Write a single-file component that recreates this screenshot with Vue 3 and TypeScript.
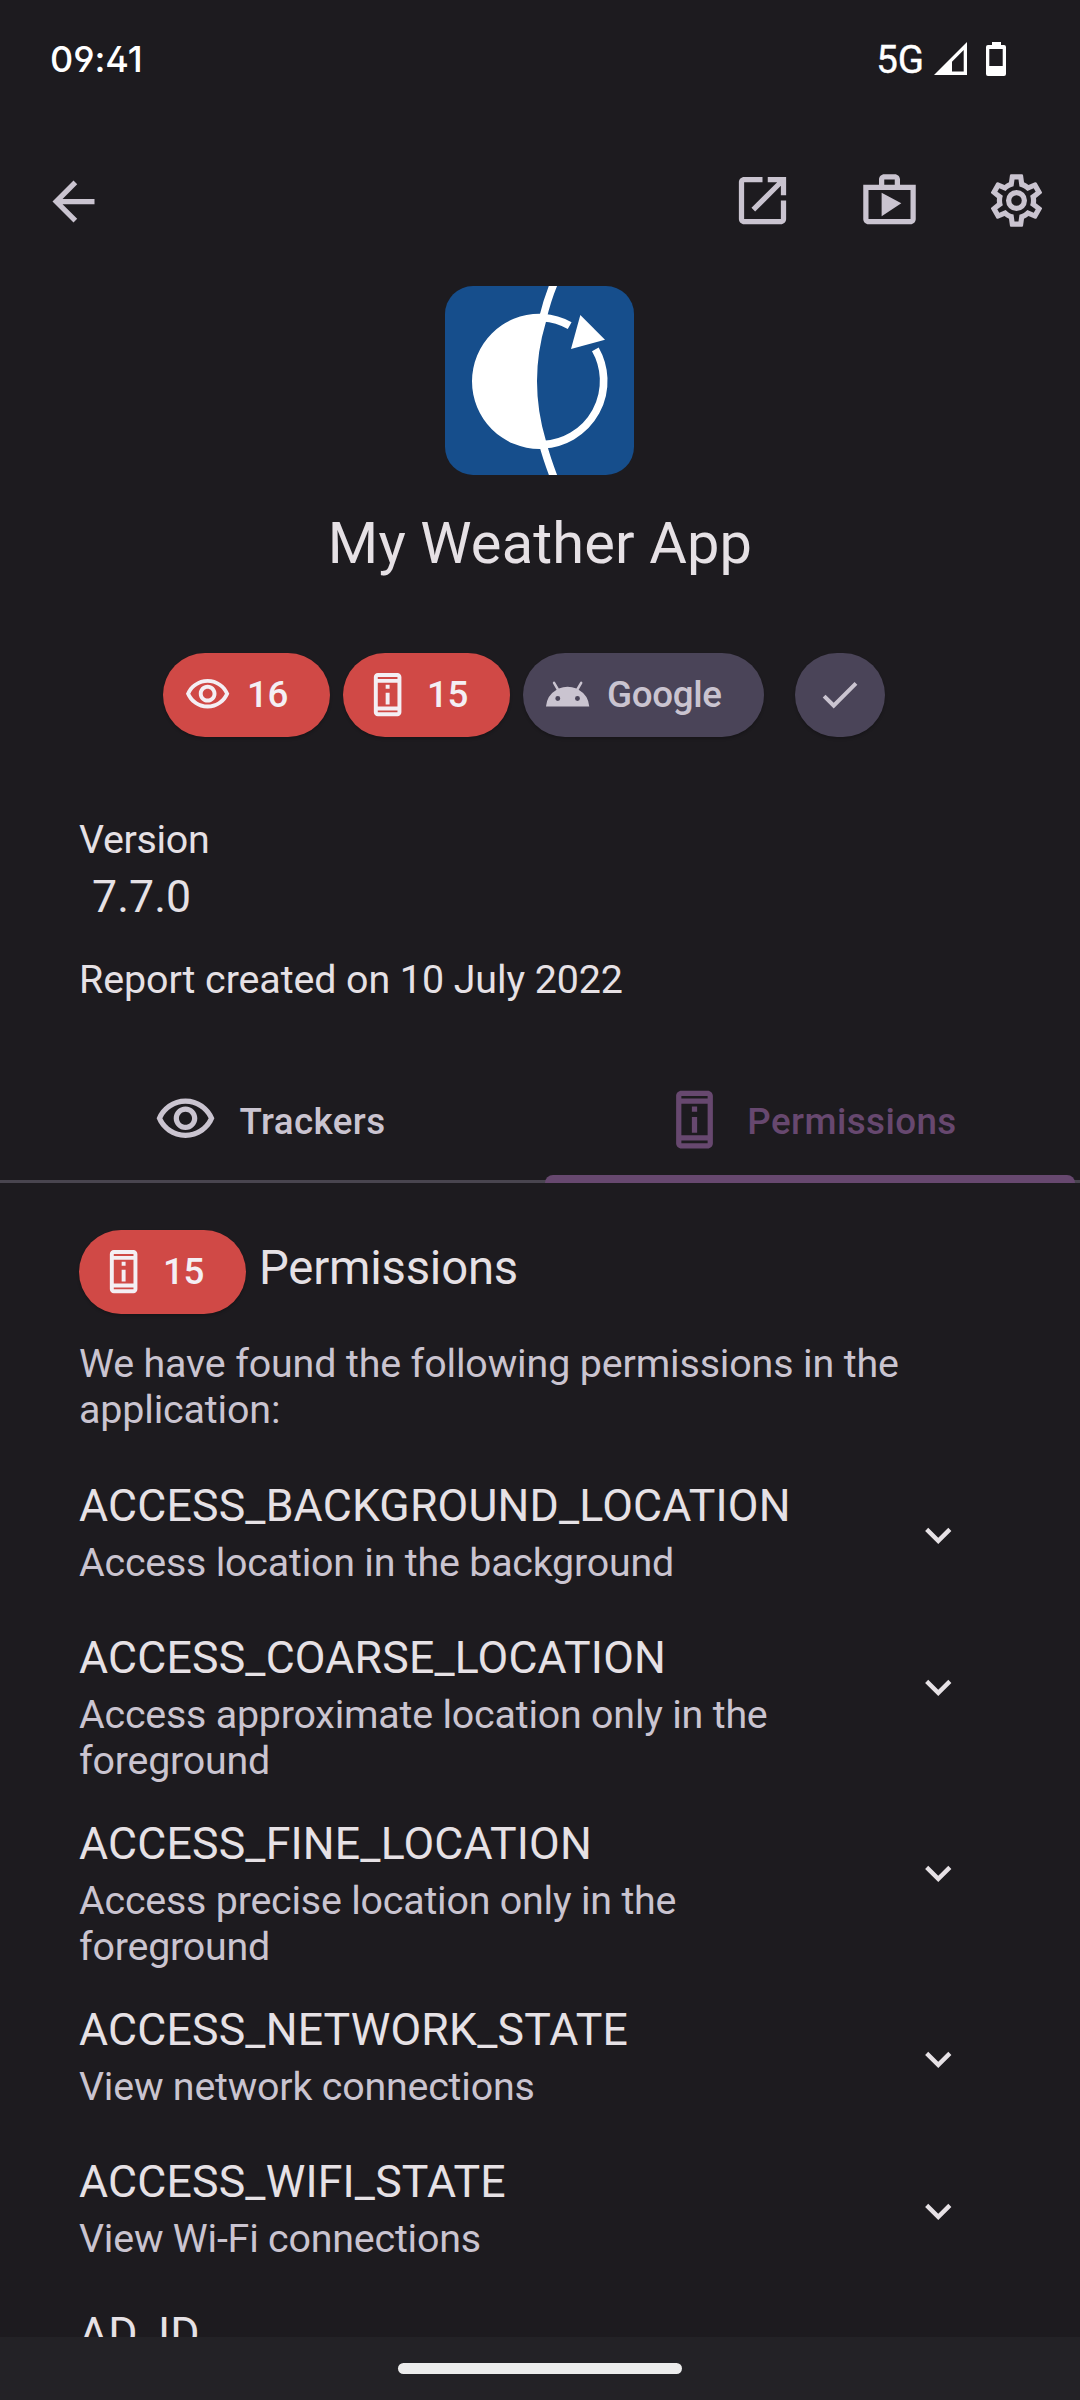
<script setup lang="ts">
interface Permission {
  name: string
  description: string
}

const permissions: Permission[] = [
  { name: 'ACCESS_BACKGROUND_LOCATION', description: 'Access location in the background' },
  { name: 'ACCESS_COARSE_LOCATION', description: 'Access approximate location only in the foreground' },
  { name: 'ACCESS_FINE_LOCATION', description: 'Access precise location only in the foreground' },
  { name: 'ACCESS_NETWORK_STATE', description: 'View network connections' },
  { name: 'ACCESS_WIFI_STATE', description: 'View Wi-Fi connections' },
  { name: 'AD_ID', description: '' },
]

const icons = {
  back: 'M20 11H7.83l5.59-5.59L12 4l-8 8 8 8 1.41-1.41L7.83 13H20v-2z',
  shop: 'M16 6V4c0-1.11-.89-2-2-2h-4c-1.11 0-2 .89-2 2v2H2v13c0 1.11.89 2 2 2h16c1.11 0 2-.89 2-2V6h-6zm-6-2h4v2h-4V4zm10 15H4V8h16v11zM9 18l7.5-5L9 9z',
  open: 'M5 3C3.9 3 3 3.9 3 5V19C3 20.1 3.9 21 5 21H19C20.1 21 21 20.1 21 19V12H19V19H5V5H12V3H5M14 3V5H17.6L7.8 14.8L9.2 16.2L19 6.4V10H21V3H14Z',
  gear: 'M12,8A4,4 0 0,1 16,12A4,4 0 0,1 12,16A4,4 0 0,1 8,12A4,4 0 0,1 12,8M12,10A2,2 0 0,0 10,12A2,2 0 0,0 12,14A2,2 0 0,0 14,12A2,2 0 0,0 12,10M10,22C9.75,22 9.54,21.82 9.5,21.58L9.13,18.93C8.5,18.68 7.96,18.34 7.44,17.94L4.95,18.95C4.73,19.03 4.46,18.95 4.34,18.73L2.34,15.27C2.21,15.05 2.27,14.78 2.46,14.63L4.57,12.97L4.5,12L4.57,11L2.46,9.37C2.27,9.22 2.21,8.95 2.34,8.73L4.34,5.27C4.46,5.05 4.73,4.96 4.95,5.05L7.44,6.05C7.96,5.66 8.5,5.32 9.13,5.07L9.5,2.42C9.54,2.18 9.75,2 10,2H14C14.25,2 14.46,2.18 14.5,2.42L14.87,5.07C15.5,5.32 16.04,5.66 16.56,6.05L19.05,5.05C19.27,4.96 19.54,5.05 19.66,5.27L21.66,8.73C21.79,8.95 21.73,9.22 21.54,9.37L19.43,11L19.5,12L19.43,13L21.54,14.63C21.73,14.78 21.79,15.05 21.66,15.27L19.66,18.73C19.54,18.95 19.27,19.04 19.05,18.95L16.56,17.95C16.04,18.34 15.5,18.68 14.87,18.93L14.5,21.58C14.46,21.82 14.25,22 14,22H10M11.25,4L10.88,6.61C9.68,6.86 8.62,7.5 7.85,8.39L5.44,7.35L4.69,8.65L6.8,10.2C6.4,11.37 6.4,12.64 6.8,13.8L4.68,15.36L5.43,16.66L7.86,15.62C8.63,16.5 9.68,17.14 10.87,17.38L11.24,20H12.76L13.13,17.39C14.32,17.14 15.37,16.5 16.14,15.62L18.57,16.66L19.32,15.36L17.2,13.81C17.6,12.64 17.6,11.37 17.2,10.2L19.31,8.65L18.56,7.35L16.15,8.39C15.38,7.5 14.32,6.86 13.12,6.62L12.75,4H11.25Z',
  eye: 'M12 6c3.79 0 7.17 2.13 8.82 5.5C19.17 14.87 15.79 17 12 17s-7.17-2.13-8.82-5.5C4.83 8.13 8.21 6 12 6m0-2C7 4 2.73 7.11 1 11.5 2.73 15.89 7 19 12 19s9.27-3.11 11-7.5C21.27 7.11 17 4 12 4zm0 5c1.38 0 2.5 1.12 2.5 2.5S13.38 14 12 14s-2.5-1.12-2.5-2.5S10.62 9 12 9m0-2c-2.48 0-4.5 2.02-4.5 4.5S9.52 16 12 16s4.5-2.02 4.5-4.5S14.48 7 12 7z',
  device: 'M13 7h-2v2h2V7zm0 4h-2v6h2v-6zm4-9.99L7 1c-1.1 0-2 .9-2 2v18c0 1.1.9 2 2 2h10c1.1 0 2-.9 2-2V3c0-1.1-.9-1.99-2-1.99zM17 21H7v-1h10v1zm0-3H7V6h10v12zm0-14H7V3h10v1z',
  android: 'M17.6 9.48l1.84-3.18c.16-.31.04-.69-.26-.85a.637.637 0 0 0-.83.22l-1.88 3.24a11.463 11.463 0 0 0-8.94 0L5.65 5.67a.643.643 0 0 0-.87-.2c-.28.18-.37.54-.22.83L6.4 9.48A10.81 10.81 0 0 0 1 18h22a10.81 10.81 0 0 0-5.4-8.52zM7 15.25a1.25 1.25 0 1 1 0-2.5 1.25 1.25 0 0 1 0 2.5zm10 0a1.25 1.25 0 1 1 0-2.5 1.25 1.25 0 0 1 0 2.5z',
  check: 'M9 16.17L4.83 12l-1.42 1.41L9 19 21 7l-1.41-1.41z',
  chevron: 'M7.41 8.58L12 13.17l4.59-4.59L18 10l-6 6-6-6z',
}
</script>

<template>
  <div class="screen">
    <header class="status">
      <span class="clock">09:41</span>
      <div class="indicators">
        <span class="network">5G</span>
        <svg class="signal" viewBox="0 0 33 33"><path fill-rule="evenodd" d="M33 0V33H0ZM29.7 8L18 19.7V29.5H29.7Z" /></svg>
        <svg class="battery" viewBox="0 0 20 34"><path fill-rule="evenodd" d="M6 0h9v3h3a2 2 0 0 1 2 2v27a2 2 0 0 1-2 2H2a2 2 0 0 1-2-2V5a2 2 0 0 1 2-2h4zM3.3 7v17h13.4V7z" /></svg>
      </div>
    </header>

    <nav class="toolbar">
      <svg class="icon" viewBox="0 0 24 24"><path :d="icons.back" /></svg>
      <div class="actions">
        <svg class="icon" viewBox="0 0 24 24"><path :d="icons.open" /></svg>
        <svg class="icon" viewBox="0 0 24 24"><path fill-rule="evenodd" :d="icons.shop" /></svg>
        <svg class="icon" viewBox="0 0 24 24"><path :d="icons.gear" /></svg>
      </div>
    </nav>

    <section class="hero">
      <svg class="logo" viewBox="75 48 567 567">
        <rect x="75" y="48" width="567" height="567" fill="#164e8c" />
        <path class="white" d="M380 132Q370 131 359 131A203 203 0 0 0 359 537Q370 537 380 536L378 513Q351 424 351 334T378 155Z" />
        <path class="ring" d="M368 143Q412 146 449 167M526 238A191.500 191.500 0 0 1 370 524" />
        <path class="ring" d="M402 40Q382 88 368 146M368 520Q380 566 402 623" />
        <path class="white" d="M481 135L555 209L453 237Z" />
      </svg>
      <h1>My Weather App</h1>
    </section>

    <div class="chips">
      <div class="chip danger">
        <svg viewBox="0 0 24 24"><path :d="icons.eye" /></svg><span>16</span>
      </div>
      <div class="chip danger">
        <svg viewBox="0 0 24 24"><path :d="icons.device" /></svg><span>15</span>
      </div>
      <div class="chip wide">
        <svg viewBox="0 0 24 24"><path :d="icons.android" /></svg><span>Google</span>
      </div>
      <div class="chip round">
        <svg viewBox="0 0 24 24"><path :d="icons.check" /></svg>
      </div>
    </div>

    <section class="details">
      <p class="label">Version</p>
      <p class="version">7.7.0</p>
      <p class="label report">Report created on 10 July 2022</p>
    </section>

    <div class="tabs">
      <div class="tab">
        <svg class="icon" viewBox="0 0 24 24"><path :d="icons.eye" /></svg><span>Trackers</span>
      </div>
      <div class="tab active">
        <svg class="icon" viewBox="0 0 24 24"><path :d="icons.device" /></svg><span>Permissions</span>
      </div>
    </div>

    <main class="content">
      <div class="heading">
        <div class="chip danger">
          <svg viewBox="0 0 24 24"><path :d="icons.device" /></svg><span>15</span>
        </div>
        <h2>Permissions</h2>
      </div>
      <p class="intro">We have found the following permissions in the application:</p>
      <ul class="list">
        <li v-for="item in permissions" :key="item.name">
          <div class="text">
            <h3>{{ item.name }}</h3>
            <p>{{ item.description }}</p>
          </div>
          <svg viewBox="0 0 24 24"><path :d="icons.chevron" /></svg>
        </li>
      </ul>
    </main>

    <footer class="navbar"><div class="handle"></div></footer>
  </div>
</template>

<style>
body {
  margin: 0;
  background: #1d1b1f;
}
</style>

<style scoped>
.screen {
  display: flex;
  flex-direction: column;
  width: 1080px;
  height: 2400px;
  overflow: hidden;
  background: #1d1b1f;
  color: #e6e1e5;
  font-family: Roboto, sans-serif;
}

h1, h2, h3, p, ul {
  margin: 0;
  padding: 0;
  font-weight: 400;
}

svg {
  display: block;
  flex: none;
  fill: currentColor;
}

.icon {
  width: 63px;
  height: 63px;
}

.status {
  display: flex;
  justify-content: space-between;
  flex: none;
  box-sizing: border-box;
  height: 128px;
  padding: 42px 74px 0 50px;
  color: #fff;
}

.clock {
  font: 500 36px/34px Inter, sans-serif;
  font-feature-settings: 'ss01';
  letter-spacing: -0.1px;
}

.indicators {
  display: flex;
}

.network {
  margin-right: 10px;
  font-size: 38.5px;
  font-weight: 400;
  line-height: 36px;
  -webkit-text-stroke: 0.4px currentColor;
}

.signal {
  width: 33px;
  height: 33px;
  margin-right: 19px;
}

.battery {
  width: 20px;
  height: 34px;
}

.toolbar {
  display: flex;
  align-items: center;
  justify-content: space-between;
  flex: none;
  height: 147px;
  padding: 0 32px 0 42px;
  color: #cac4d0;
}

.actions {
  display: flex;
  gap: 64px;
  margin-bottom: 2px;
}

.hero {
  display: flex;
  flex: none;
  flex-direction: column;
  align-items: center;
  height: 367px;
  padding: 11px 0 0;
}

.logo {
  width: 189px;
  height: 189px;
  margin-right: 1px;
  border-radius: 28px;
}

.logo .white {
  fill: #fff;
}

.logo .ring {
  fill: none;
  stroke: #fff;
  stroke-width: 23;
}

h1 {
  margin-top: 34px;
  font-size: 57.75px;
  line-height: 68px;
  letter-spacing: 0.15px;
}

.chips {
  display: flex;
  flex: none;
  gap: 13px;
  margin-left: 163px;
}

.chip {
  display: flex;
  align-items: center;
  flex: none;
  box-sizing: border-box;
  width: 167px;
  height: 84px;
  padding-left: 21px;
  border-radius: 42px;
  background: #4a4458;
  color: #cac4d0;
  font-size: 36.75px;
  font-weight: 500;
  letter-spacing: -0.35px;
  box-shadow: 0 2px 3px rgb(0 0 0 / 20%);
}

.chip svg {
  width: 47.25px;
  height: 47.25px;
  margin-right: 15.75px;
}

.chip span {
  margin-bottom: 2px;
}

.chip.danger {
  background: #d04946;
  color: #f4eff4;
}

.chip.wide {
  width: 241px;
}

.chip.round {
  width: 90px;
  margin-left: 18px;
}

.details {
  flex: none;
  box-sizing: border-box;
  height: 320px;
  padding: 80px 79px 0;
}

.label {
  font-size: 39.375px;
  line-height: 46px;
  letter-spacing: -0.3px;
}

.version {
  margin-top: 8px;
  padding-left: 13px;
  font-size: 44.625px;
  line-height: 52px;
  letter-spacing: 0.1px;
}

.report {
  margin-top: 34px;
  letter-spacing: -0.07px;
}

.tabs {
  display: flex;
  flex: none;
  position: relative;
  height: 123px;
  border-bottom: 3px solid #49454f;
  color: #cac4d0;
  font-size: 36.75px;
  font-weight: 500;
  letter-spacing: 0.42px;
}

.tab {
  display: flex;
  flex: 1;
  align-items: center;
  justify-content: center;
  position: relative;
}

.tab .icon {
  margin: 2px 22px 0 0;
}

.tab span {
  margin-top: 5px;
}

.tab.active {
  color: #67486f;
}

.tab.active .icon {
  margin-right: 21px;
}

.tab.active::after {
  content: '';
  position: absolute;
  right: 5px;
  bottom: -3px;
  left: 5px;
  height: 8px;
  border-radius: 8px 8px 0 0;
  background: #67486f;
}

.content {
  flex: 1;
  min-height: 0;
  overflow: hidden;
  padding: 47px 79px 0;
}

.heading {
  display: flex;
}

h2 {
  margin: 11px 0 0 13px;
  font-size: 47.25px;
  line-height: 55px;
  letter-spacing: -0.2px;
}

.intro {
  width: 850px;
  margin-top: 27px;
  color: #cac4d0;
  font-size: 39.375px;
  line-height: 46px;
  letter-spacing: -0.13px;
}

.list {
  margin-top: 47px;
  list-style: none;
}

.list li {
  display: flex;
  justify-content: space-between;
  box-sizing: border-box;
  min-height: 152px;
  padding: 0 37px 34px 0;
}

.text {
  width: 710px;
}

h3 {
  font-size: 44.625px;
  line-height: 52px;
  letter-spacing: 0.18px;
}

.text p {
  margin-top: 8px;
  color: #cac4d0;
  font-size: 39.375px;
  line-height: 46px;
  letter-spacing: -0.2px;
}

.list svg {
  width: 52.5px;
  height: 52.5px;
  margin-top: 29px;
}

.navbar {
  display: flex;
  justify-content: center;
  flex: none;
  height: 63px;
  background: #232226;
}

.handle {
  width: 284px;
  height: 11px;
  margin-top: 26px;
  border-radius: 6px;
  background: #ececec;
}
</style>
